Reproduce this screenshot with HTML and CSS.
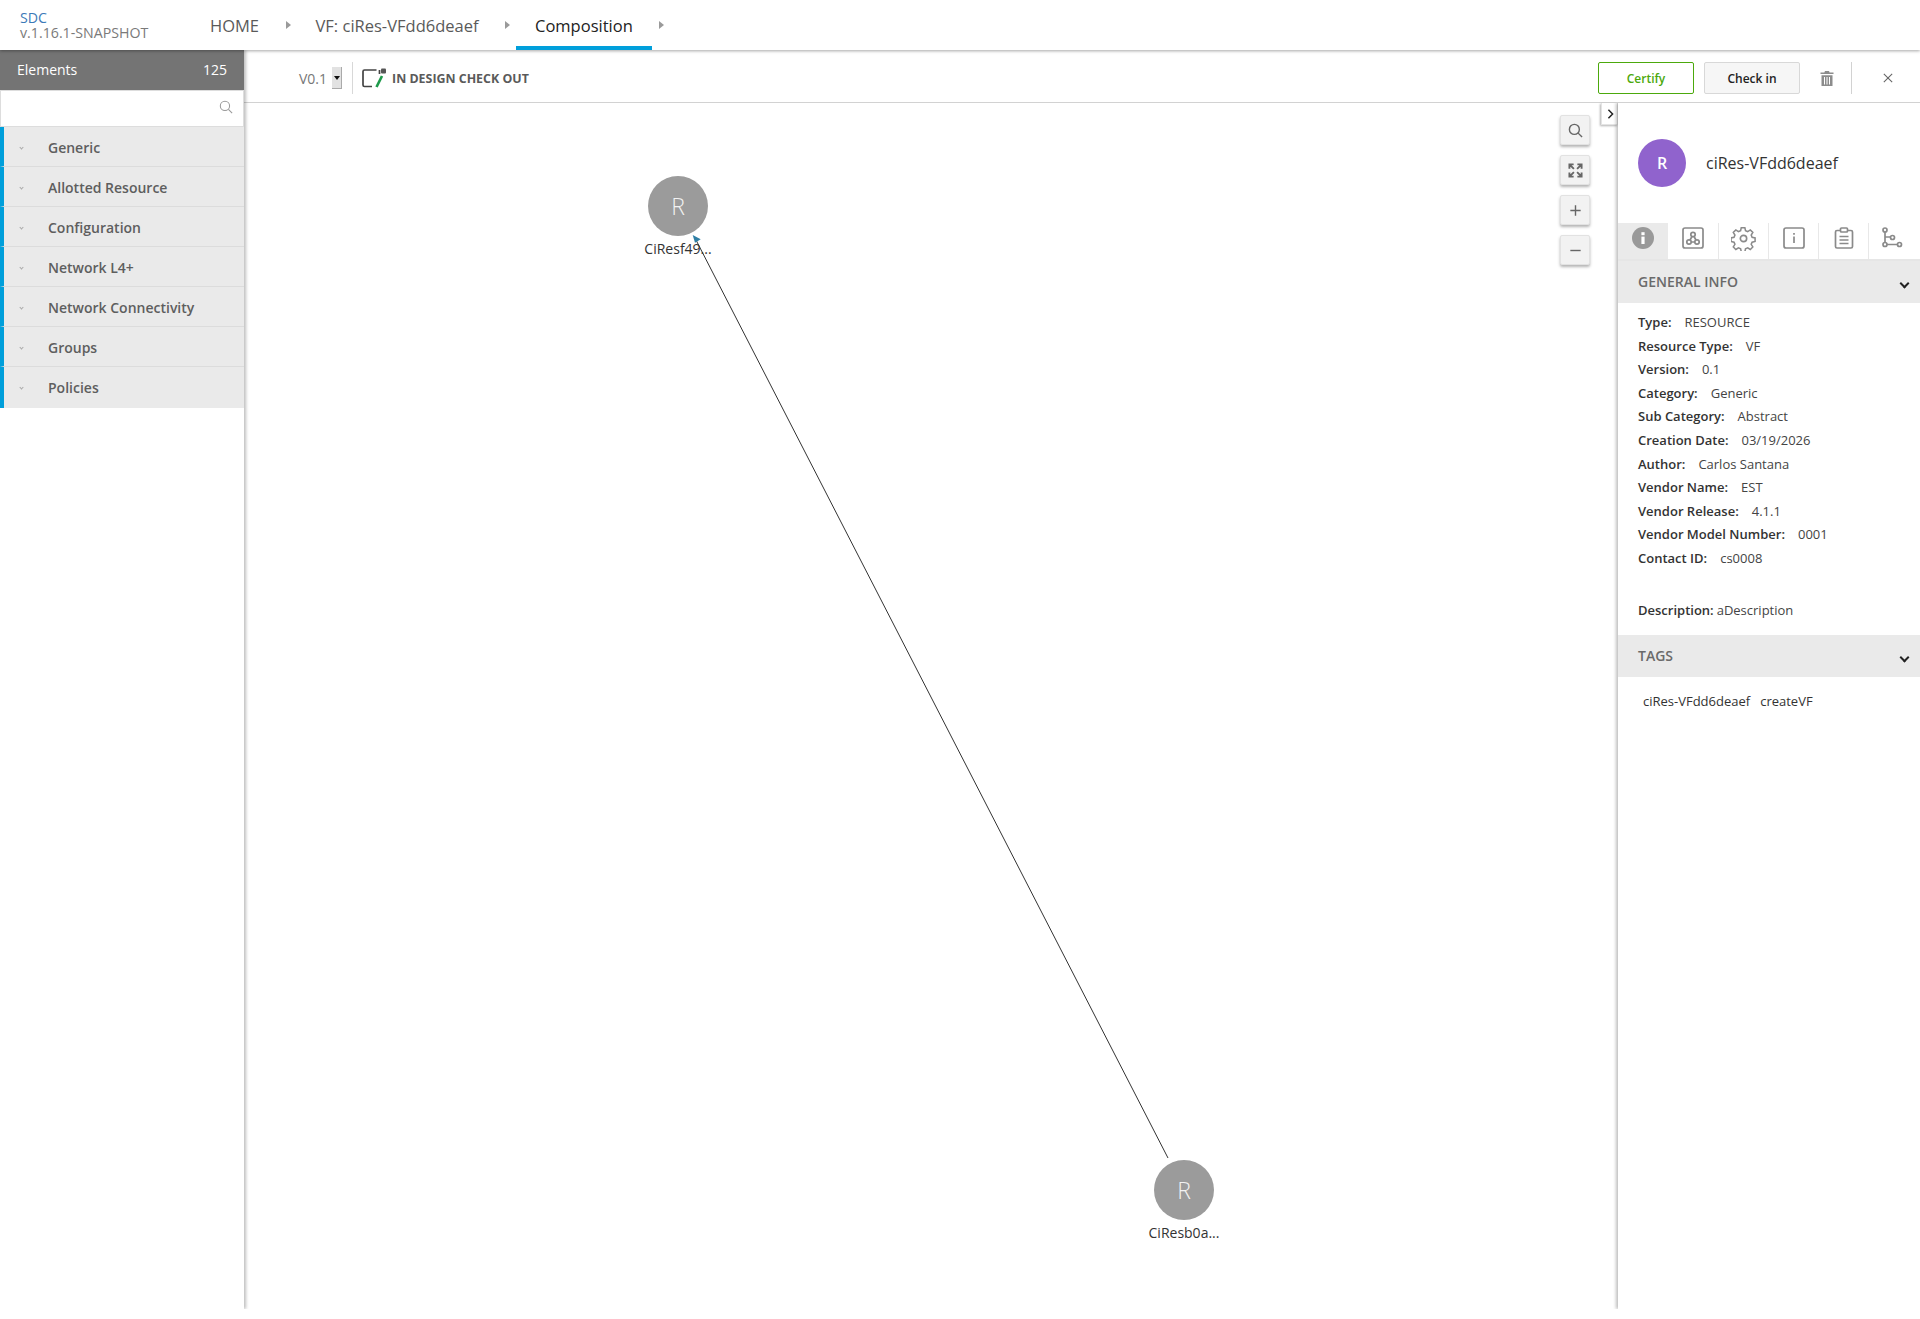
FILE: index.html
```html
<!DOCTYPE html>
<html lang="en">
<head>
    <meta charset="UTF-8">
    <title>SDC - Composition</title>
    <link rel="stylesheet" href="styles.css">
</head>
<body>
    <header class="top-bar">
        <div class="logo">
            <div class="logo-name">SDC</div>
            <div class="logo-version">v.1.16.1-SNAPSHOT</div>
        </div>
        <nav class="crumbs">
            <a class="crumb">HOME</a><i class="crumb-arrow"></i>
            <a class="crumb">VF: ciRes-VFdd6deaef</a><i class="crumb-arrow"></i>
            <a class="crumb crumb-active">Composition</a><i class="crumb-arrow"></i>
        </nav>
    </header>

    <div class="workspace">
        <aside class="palette">
            <div class="palette-head"><span>Elements</span><span>125</span></div>
            <div class="palette-search">
                <svg class="search-icon" viewBox="0 0 16 16"><circle cx="6.8" cy="6.8" r="5.3"/><path d="M10.8 10.8 L15 15"/></svg>
            </div>
            <ul class="palette-list">
                <li><i class="mini-chevron"></i>Generic</li>
                <li><i class="mini-chevron"></i>Allotted Resource</li>
                <li><i class="mini-chevron"></i>Configuration</li>
                <li><i class="mini-chevron"></i>Network L4+</li>
                <li><i class="mini-chevron"></i>Network Connectivity</li>
                <li><i class="mini-chevron"></i>Groups</li>
                <li><i class="mini-chevron"></i>Policies</li>
            </ul>
        </aside>

        <div class="editor">
            <div class="toolbar">
                <div class="version">V0.1<span class="version-select"></span></div>
                <div class="state">
                    <svg class="state-icon" viewBox="0 0 24 20">
                        <path class="state-box" d="M14.5 2 H2.5 a1.5 1.5 0 0 0 -1.5 1.5 V17 a1.5 1.5 0 0 0 1.5 1.5 H10"/>
                        <path class="state-box" d="M17.5 2 V6"/>
                        <path class="state-pen" d="M20 8 L14.5 19"/>
                        <rect class="state-dot" x="19" y="0.5" width="5" height="5" rx="1"/>
                    </svg>
                    IN DESIGN CHECK OUT
                </div>
                <div class="actions">
                    <button class="btn btn-certify">Certify</button>
                    <button class="btn btn-checkin">Check in</button>
                    <svg class="trash-icon" viewBox="0 0 14 16"><path d="M5 0.5 h4 l0.6 1.5 H13.5 V3.6 H0.5 V2 H4.4 Z"/><path d="M1.5 4.8 H12.5 V15.5 H1.5 Z M4 6.5 V14 H5 V6.5 Z M6.5 6.5 V14 H7.5 V6.5 Z M9 6.5 V14 H10 V6.5 Z" fill-rule="evenodd"/></svg>
                    <span class="action-divider"></span>
                    <svg class="close-icon" viewBox="0 0 12 12"><path d="M1 1 L11 11 M11 1 L1 11"/></svg>
                </div>
            </div>

            <div class="editor-body">
                <section class="canvas">
                    <svg class="links" width="1374" height="1206">
                        <line x1="1168" y1="1158" x2="696" y2="240" transform="translate(-244 -103)"/>
                        <path d="M692.7 235 L700.7 239.3 L695 242.7 Z" transform="translate(-244 -103)"/>
                    </svg>
                    <div class="node node-top"><div class="node-dot">R</div><div class="node-name">CiResf49...</div></div>
                    <div class="node node-bottom"><div class="node-dot">R</div><div class="node-name">CiResb0a...</div></div>

                    <div class="zoom-tools">
                        <button class="zoom-btn"><svg viewBox="0 0 16 16"><circle cx="6.8" cy="6.8" r="5.3"/><path d="M10.8 10.8 L15 15"/></svg></button>
                        <button class="zoom-btn"><svg class="expand" viewBox="0 0 16 16"><path d="M1.5 6 V1.5 H6 M1.5 1.5 L6.3 6.3 M14.5 6 V1.5 H10 M14.5 1.5 L9.7 6.3 M1.5 10 V14.5 H6 M1.5 14.5 L6.3 9.7 M14.5 10 V14.5 H10 M14.5 14.5 L9.7 9.7"/></svg></button>
                        <button class="zoom-btn"><svg viewBox="0 0 16 16"><path d="M8 2.5 V13.5 M2.5 8 H13.5"/></svg></button>
                        <button class="zoom-btn"><svg viewBox="0 0 16 16"><path d="M2.5 8 H13.5"/></svg></button>
                    </div>
                    <button class="panel-toggle"><svg viewBox="0 0 8 12"><path d="M1.5 1 L6.5 6 L1.5 11"/></svg></button>
                </section>

                <aside class="details">
                    <div class="details-head">
                        <div class="avatar">R</div>
                        <div class="details-name">ciRes-VFdd6deaef</div>
                    </div>

                    <div class="tabs">
                        <div class="tab tab-active">
                            <svg viewBox="0 0 22 22"><circle cx="11" cy="11" r="11" fill="#999"/><rect x="9.4" y="9.6" width="3.2" height="7.4" fill="#fff"/><rect x="9.4" y="5.2" width="3.2" height="3" fill="#fff"/></svg>
                        </div>
                        <div class="tab">
                            <svg viewBox="0 0 22 22"><rect x="1" y="1" width="20" height="20" rx="2"/><circle cx="11" cy="7.5" r="2.2"/><circle cx="7" cy="15" r="2.2"/><circle cx="15" cy="15" r="2.2"/><path d="M10 9.5 L8 13 M12 9.5 L14 13 M9.2 15 H12.8"/></svg>
                        </div>
                        <div class="tab tab-gear">
                            <svg viewBox="0 0 26 26"><path d="M11 1.5 h4 l0.7 3.3 l2.4 1 l2.9 -1.8 l2.8 2.8 l-1.8 2.9 l1 2.4 l3.3 0.7 v4 l-3.3 0.7 l-1 2.4 l1.8 2.9 l-2.8 2.8 l-2.9 -1.8 l-2.4 1 l-0.7 3.3 h-4 l-0.7 -3.3 l-2.4 -1 l-2.9 1.8 l-2.8 -2.8 l1.8 -2.9 l-1 -2.4 l-3.3 -0.7 v-4 l3.3 -0.7 l1 -2.4 l-1.8 -2.9 l2.8 -2.8 l2.9 1.8 l2.4 -1 Z" transform="translate(0.8 0.8) scale(0.94) translate(-0.5 -0.5)"/><circle cx="13" cy="13" r="3.3"/></svg>
                        </div>
                        <div class="tab">
                            <svg viewBox="0 0 22 22"><rect x="1" y="1" width="20" height="20" rx="2"/><path d="M11 9.5 V16 M11 6 V7.8"/></svg>
                        </div>
                        <div class="tab">
                            <svg viewBox="0 0 22 22"><path d="M7.5 3.5 H4 a1.5 1.5 0 0 0 -1.5 1.5 V19.5 a1.5 1.5 0 0 0 1.5 1.5 H18 a1.5 1.5 0 0 0 1.5 -1.5 V5 a1.5 1.5 0 0 0 -1.5 -1.5 H14.5"/><rect x="7.5" y="1" width="7" height="4" rx="1"/><path d="M6.5 9.5 H15.5 M6.5 13 H15.5 M6.5 16.5 H15.5"/></svg>
                        </div>
                        <div class="tab tab-last">
                            <svg viewBox="0 0 22 22"><circle cx="4" cy="3" r="2"/><circle cx="4" cy="17.5" r="2"/><circle cx="11.5" cy="10.5" r="2"/><circle cx="18.5" cy="17.5" r="2"/><path d="M4 5 V15.5 M6 17.5 H16.5 M4 10 H9.5"/></svg>
                        </div>
                    </div>

                    <div class="section-head">GENERAL INFO<i class="section-chevron"></i></div>
                    <div class="info">
                        <div class="info-row"><b>Type:</b>RESOURCE</div>
                        <div class="info-row"><b>Resource Type:</b>VF</div>
                        <div class="info-row"><b>Version:</b>0.1</div>
                        <div class="info-row"><b>Category:</b>Generic</div>
                        <div class="info-row"><b>Sub Category:</b>Abstract</div>
                        <div class="info-row"><b>Creation Date:</b>03/19/2026</div>
                        <div class="info-row"><b>Author:</b>Carlos Santana</div>
                        <div class="info-row"><b>Vendor Name:</b>EST</div>
                        <div class="info-row"><b>Vendor Release:</b>4.1.1</div>
                        <div class="info-row"><b>Vendor Model Number:</b>0001</div>
                        <div class="info-row"><b>Contact ID:</b>cs0008</div>
                        <div class="info-row info-desc"><b>Description:</b>aDescription</div>
                    </div>

                    <div class="section-head">TAGS<i class="section-chevron"></i></div>
                    <div class="tag-list"><span>ciRes-VFdd6deaef</span><span>createVF</span></div>
                </aside>
            </div>
        </div>
    </div>
</body>
</html>
```

FILE: styles.css
```css
/* Reset */
* {
    margin: 0;
    padding: 0;
    box-sizing: border-box;
    font-family: "Open Sans", sans-serif;
}

html, body {
    height: 1319px;
    overflow: hidden;
    background: #fff;
    color: #333;
}

/* Top bar */
.top-bar {
    display: flex;
    height: 50px;
    padding-left: 20px;
    box-shadow: 0 1px 3px rgba(0, 0, 0, 0.35);
    position: relative;
    z-index: 3;
    background: #fff;
}

.logo {
    width: 171px;
    padding-top: 10px;
    font-size: 14.2px;
    line-height: 15px;
}

.logo-name {
    color: #3c7ab8;
}

.logo-version {
    color: #7a7a7a;
}

.crumbs {
    display: flex;
    align-items: center;
    gap: 6px;
    height: 50px;
}

.crumb {
    display: flex;
    align-items: center;
    height: 50px;
    padding: 5px 19px 0;
    font-size: 16.5px;
    color: #5a5a5a;
    border-bottom: 4px solid transparent;
}

.crumb-active {
    color: #222;
    font-weight: 500;
    border-bottom-color: #009fdb;
}

.crumb-arrow {
    width: 0;
    height: 0;
    margin-left: 1.5px;
    border-left: 5px solid #9a9a9a;
    border-top: 4px solid transparent;
    border-bottom: 4px solid transparent;
}

.workspace {
    display: flex;
    height: 1259px;
}

/* Left palette */
.palette {
    width: 244px;
    flex-shrink: 0;
    background: #fff;
    box-shadow: 2px 0 3px rgba(0, 0, 0, 0.25);
    clip-path: inset(0 -6px 0 0);
    position: relative;
    z-index: 2;
}

.palette-head {
    display: flex;
    justify-content: space-between;
    align-items: center;
    height: 40px;
    padding: 0 17px 1px;
    background: #747474;
    color: #fff;
    font-size: 14px;
    font-weight: 500;
}

.palette-search {
    display: flex;
    align-items: center;
    justify-content: flex-end;
    height: 37px;
    padding: 0 10px 3px 0;
    border: 1px solid #ddd;
}

.search-icon {
    width: 14px;
    height: 14px;
    fill: none;
    stroke: #999;
    stroke-width: 1.2;
}

.palette-list {
    list-style: none;
}

.palette-list li {
    display: flex;
    align-items: center;
    height: 40px;
    padding: 2px 0 0 16px;
    background: #eaeaea;
    border-left: 4px solid #009fdb;
    border-bottom: 1px solid #dcdcdc;
    font-size: 14px;
    font-weight: 600;
    color: #5e5e5e;
}

.palette-list li:last-child {
    height: 41px;
    padding-bottom: 2px;
    border-bottom: 0;
}

.mini-chevron {
    width: 3px;
    height: 3px;
    margin-right: 25px;
    border-right: 1px solid #aaa;
    border-bottom: 1px solid #aaa;
    transform: rotate(45deg);
}

/* Editor */
.editor {
    flex: 1;
    display: flex;
    flex-direction: column;
    min-width: 0;
}

.toolbar {
    display: flex;
    align-items: center;
    height: 53px;
    flex-shrink: 0;
    padding: 4px 0 0 55px;
    border-bottom: 1px solid #d2d2d2;
}

.version {
    display: flex;
    align-items: center;
    gap: 5px;
    height: 32px;
    padding-right: 10px;
    border-right: 1px solid #d8d8d8;
    font-size: 14px;
    color: #777;
}

.version-select {
    position: relative;
    display: block;
    width: 10px;
    height: 22px;
    background: #e2e2e2;
    border-right: 1px solid #aaa;
    border-bottom: 1px solid #aaa;
}

.version-select::after {
    content: "";
    position: absolute;
    left: 2px;
    top: 9px;
    border-left: 3px solid transparent;
    border-right: 3px solid transparent;
    border-top: 4px solid #111;
}

.state {
    display: flex;
    align-items: center;
    gap: 6px;
    margin-left: 9px;
    font-size: 12.4px;
    font-weight: 700;
    color: #5a5a5a;
}

.state-icon {
    width: 24px;
    height: 20px;
    fill: none;
}

.state-box {
    stroke: #444;
    stroke-width: 1.7;
}

.state-pen {
    stroke: #1e9a4b;
    stroke-width: 2.6;
}

.state-dot {
    fill: #555;
}

.actions {
    display: flex;
    align-items: center;
    margin-left: auto;
    height: 32px;
}

.btn {
    width: 96px;
    height: 32px;
    border-radius: 2px;
    font-size: 12px;
    font-weight: 600;
    background: #fff;
}

.btn-certify {
    border: 1px solid #4ca90c;
    color: #4ca90c;
}

.btn-checkin {
    margin-left: 10px;
    background: #f6f6f6;
    border: 1px solid #d8d8d8;
    color: #222;
}

.trash-icon {
    width: 14px;
    height: 17px;
    margin-left: 20px;
    fill: #8c8c8c;
}

.action-divider {
    width: 1px;
    height: 32px;
    margin-left: 17px;
    background: #d2d2d2;
}

.close-icon {
    width: 10px;
    height: 10px;
    margin-left: 31px;
    margin-right: 27px;
    fill: none;
    stroke: #666;
    stroke-width: 1.3;
    overflow: visible;
}

.editor-body {
    flex: 1;
    display: flex;
    min-height: 0;
}

/* Canvas */
.canvas {
    position: relative;
    flex: 1;
    height: 1206px;
}

.links {
    position: absolute;
    left: 0;
    top: 0;
}

.links line {
    stroke: #333;
    stroke-width: 1;
}

.links path {
    fill: #2f7fa5;
}

.node {
    position: absolute;
    width: 90px;
    text-align: center;
}

.node-top {
    left: 389px;
    top: 73px;
}

.node-bottom {
    left: 895px;
    top: 1057px;
}

.node-dot {
    width: 60px;
    height: 60px;
    margin: 0 auto;
    border-radius: 50%;
    background: #9b9b9b;
    color: #f2f2f2;
    font-size: 23px;
    font-weight: 300;
    line-height: 60px;
}

.node-name {
    margin-top: 4px;
    font-size: 14px;
    line-height: 18px;
    color: #333;
}

.zoom-tools {
    position: absolute;
    right: 28px;
    top: 12px;
    display: flex;
    flex-direction: column;
    gap: 10px;
}

.zoom-btn {
    display: flex;
    align-items: center;
    justify-content: center;
    width: 30px;
    height: 30px;
    background: #f2f2f2;
    border: 1px solid #e2e2e2;
    border-radius: 2px;
    box-shadow: 0 2px 3px rgba(0, 0, 0, 0.3);
}

.zoom-btn svg {
    width: 15px;
    height: 15px;
    fill: none;
    stroke: #666;
    stroke-width: 1.5;
}

.zoom-btn svg.expand {
    stroke-width: 2;
}

.panel-toggle {
    position: absolute;
    right: 0;
    top: 0;
    display: flex;
    align-items: center;
    justify-content: center;
    width: 17px;
    height: 22px;
    padding-left: 2px;
    background: #fff;
    border: 1px solid #e4e4e4;
    border-top: 0;
    box-shadow: -1px 1px 2px rgba(0, 0, 0, 0.3);
}

.panel-toggle svg {
    width: 7px;
    height: 10px;
    fill: none;
    stroke: #222;
    stroke-width: 1.8;
}

/* Right details panel */
.details {
    width: 302px;
    flex-shrink: 0;
    height: 1206px;
    background: #fff;
    box-shadow: -2px 0 3px rgba(0, 0, 0, 0.25);
    clip-path: inset(0 0 0 -6px);
    position: relative;
}

.details-head {
    display: flex;
    align-items: center;
    gap: 20px;
    height: 120px;
    padding-left: 20px;
}

.avatar {
    width: 48px;
    height: 48px;
    border-radius: 50%;
    background: #9063cd;
    color: #fff;
    font-size: 16px;
    font-weight: 600;
    line-height: 48px;
    text-align: center;
}

.details-name {
    font-size: 16px;
    color: #333;
}

.tabs {
    display: flex;
    height: 38px;
    border-bottom: 2px solid #e6e6e6;
}

.tab {
    display: flex;
    align-items: flex-start;
    justify-content: center;
    width: 50.3px;
    padding-top: 4px;
    border-right: 1px solid #e8e8e8;
}

.tab-active {
    background: #eaeaea;
    border-right: 0;
}

.tab-last {
    padding-right: 6px;
    border-right: 0;
}

.tab svg {
    width: 22px;
    height: 22px;
    fill: none;
    stroke: #8a8a8a;
    stroke-width: 1.7;
}

.tab-gear svg {
    width: 25px;
    height: 25px;
    margin-top: -1px;
}

.tab-active svg {
    stroke: none;
}

.section-head {
    position: relative;
    height: 42px;
    padding-left: 20px;
    background: #eaeaea;
    font-size: 14px;
    font-weight: 600;
    line-height: 42px;
    color: #6a6a6a;
}

.section-chevron {
    position: absolute;
    right: 12px;
    top: 19px;
    width: 7px;
    height: 7px;
    border-right: 2px solid #222;
    border-bottom: 2px solid #222;
    transform: rotate(45deg);
}

.info {
    height: 332px;
    padding: 8px 20px 0;
    font-size: 13px;
    color: #444;
}

.info-row {
    height: 23.6px;
    line-height: 23.6px;
}

.info-row b {
    margin-right: 13px;
    font-weight: 600;
    color: #333;
}

.info-desc {
    margin-top: 28px;
}

.info-desc b {
    margin-right: 3px;
}

.tag-list {
    display: flex;
    gap: 10px;
    padding: 14px 25px;
    font-size: 13px;
    line-height: 20px;
    color: #333;
}
```
